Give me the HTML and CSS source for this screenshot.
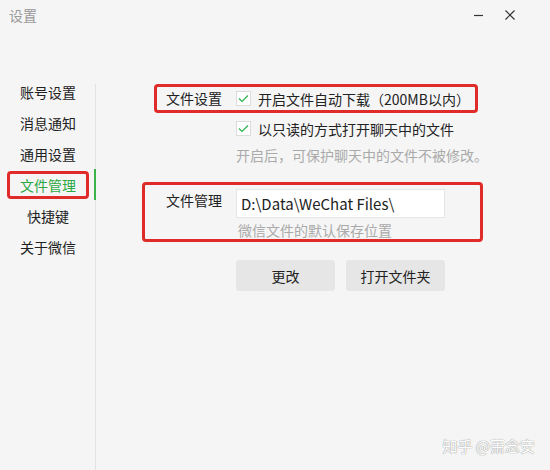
FILE: index.html
```html
<!DOCTYPE html>
<html lang="zh-CN">
<head>
  <meta charset="UTF-8" />
  <title>设置</title>
  <link rel="stylesheet" href="styles.css">
</head>
<body>

<div class="window">
  <header class="titlebar">
    <span class="title">设置</span>
    <div class="controls">
      <svg class="ctl" width="12" height="12" viewBox="0 0 12 12"><path d="M1 6.5h9" stroke="#333" stroke-width="1.2"/></svg>
      <svg class="ctl" width="12" height="12" viewBox="0 0 12 12"><path d="M1.5 1.5l9 9M10.5 1.5l-9 9" stroke="#333" stroke-width="1.2"/></svg>
    </div>
  </header>

  <div class="content">
    <nav class="sidebar">
      <a class="nav-item">账号设置</a>
      <a class="nav-item">消息通知</a>
      <a class="nav-item">通用设置</a>
      <a class="nav-item active"><span class="mark">文件管理</span></a>
      <a class="nav-item">快捷键</a>
      <a class="nav-item">关于微信</a>
    </nav>

    <main class="panel">
      <div class="row mark-setting">
        <span class="label">文件设置</span>
        <label class="check">
          <span class="box"><svg width="11" height="9" viewBox="0 0 11 9"><path d="M1 4.5l3 3L10 1.5" fill="none" stroke="#2bb24c" stroke-width="1.2"/></svg></span>
          开启文件自动下载（200MB以内）
        </label>
      </div>
      <div class="row indent">
        <label class="check">
          <span class="box"><svg width="11" height="9" viewBox="0 0 11 9"><path d="M1 4.5l3 3L10 1.5" fill="none" stroke="#2bb24c" stroke-width="1.2"/></svg></span>
          以只读的方式打开聊天中的文件
        </label>
      </div>
      <p class="hint indent">开启后，可保护聊天中的文件不被修改。</p>

      <div class="mark-path">
        <span class="label">文件管理</span>
        <div class="path-col">
          <div class="path-input">D:\Data\WeChat Files\</div>
          <p class="hint small-indent">微信文件的默认保存位置</p>
        </div>
      </div>

      <div class="buttons">
        <button>更改</button>
        <button>打开文件夹</button>
      </div>
    </main>
  </div>

  <div class="watermark">知乎 @萧念安</div>
</div>

</body>
</html>
```

FILE: styles.css
```css
body {
  margin: 0;
  font-family: "Noto Sans CJK SC", "Noto Sans", sans-serif;
  background-color: #f5f5f5;
  color: #222;
}

.window {
  position: relative;
  width: 550px;
  height: 470px;
  overflow: hidden;
  display: flex;
  flex-direction: column;
}

.titlebar {
  height: 30px;
  padding: 0 34px 0 9px;
  display: flex;
  justify-content: space-between;
  align-items: center;
}

.title {
  font-size: 14px;
  color: #999;
}

.controls {
  display: flex;
  gap: 19px;
}

.ctl {
  display: block;
}

.content {
  flex: 1;
  display: flex;
  margin-top: 46px;
}

.sidebar {
  width: 96px;
  display: flex;
  flex-direction: column;
  background: linear-gradient(#e2e2e2, #e2e2e2) no-repeat right 0 top 8px / 1px 100%;
}

.nav-item {
  height: 31px;
  display: flex;
  align-items: center;
  justify-content: center;
  font-size: 14px;
  color: #222;
}

.nav-item.active {
  color: #2aa843;
  box-shadow: inset -2px 0 0 #3cb34a;
}

.nav-item .mark {
  display: inline-block;
  border: 3px solid #e02b2b;
  border-radius: 4px;
  padding: 2px 10px;
  line-height: 18px;
}

.panel {
  flex: 1;
  padding: 8px 0 0 70px;
}

.row {
  display: flex;
  align-items: center;
  height: 23px;
  font-size: 14px;
}

.mark-setting {
  display: inline-flex;
  height: 29px;
  box-sizing: border-box;
  margin-left: -12px;
  padding: 0 5px 0 9px;
  border: 3px solid #e02b2b;
  border-radius: 4px;
}

.label {
  width: 56px;
  margin-right: 14px;
  font-size: 14px;
  line-height: 23px;
  flex-shrink: 0;
}

.indent {
  margin-left: 70px;
}

.row.indent {
  margin-top: 4px;
}

.check {
  display: flex;
  align-items: center;
  gap: 7px;
}

.box {
  width: 13px;
  height: 13px;
  border: 1px solid #dcdcdc;
  background-color: #fff;
  display: flex;
  align-items: center;
  justify-content: center;
}

.hint {
  margin-top: 5px;
  margin-bottom: 0;
  font-size: 14px;
  line-height: 20px;
  color: #aaa;
}

.mark-path {
  margin: 17px 0 0 -24px;
  width: 341px;
  height: 60px;
  box-sizing: border-box;
  border: 3px solid #e02b2b;
  border-radius: 4px;
  padding: 4px 0 0 21px;
  display: flex;
  align-items: flex-start;
}

.path-input {
  width: 209px;
  height: 29px;
  box-sizing: border-box;
  border: 1px solid #e6e6e6;
  background-color: #fff;
  padding-left: 4px;
  font-size: 15px;
  line-height: 27px;
  color: #222;
}

.hint.small-indent {
  margin-top: 2px;
  padding-left: 2px;
}

.buttons {
  display: flex;
  gap: 11px;
  margin: 18px 0 0 70px;
}

.buttons button {
  width: 99px;
  height: 31px;
  border: none;
  border-radius: 3px;
  background-color: #e6e6e6;
  font-family: inherit;
  font-size: 14px;
  color: #222;
}

.watermark {
  position: absolute;
  right: 15px;
  bottom: 14px;
  font-size: 15px;
  color: #fff;
  text-shadow: 0 0 1px #999, 0 0 1px #999;
}
```
